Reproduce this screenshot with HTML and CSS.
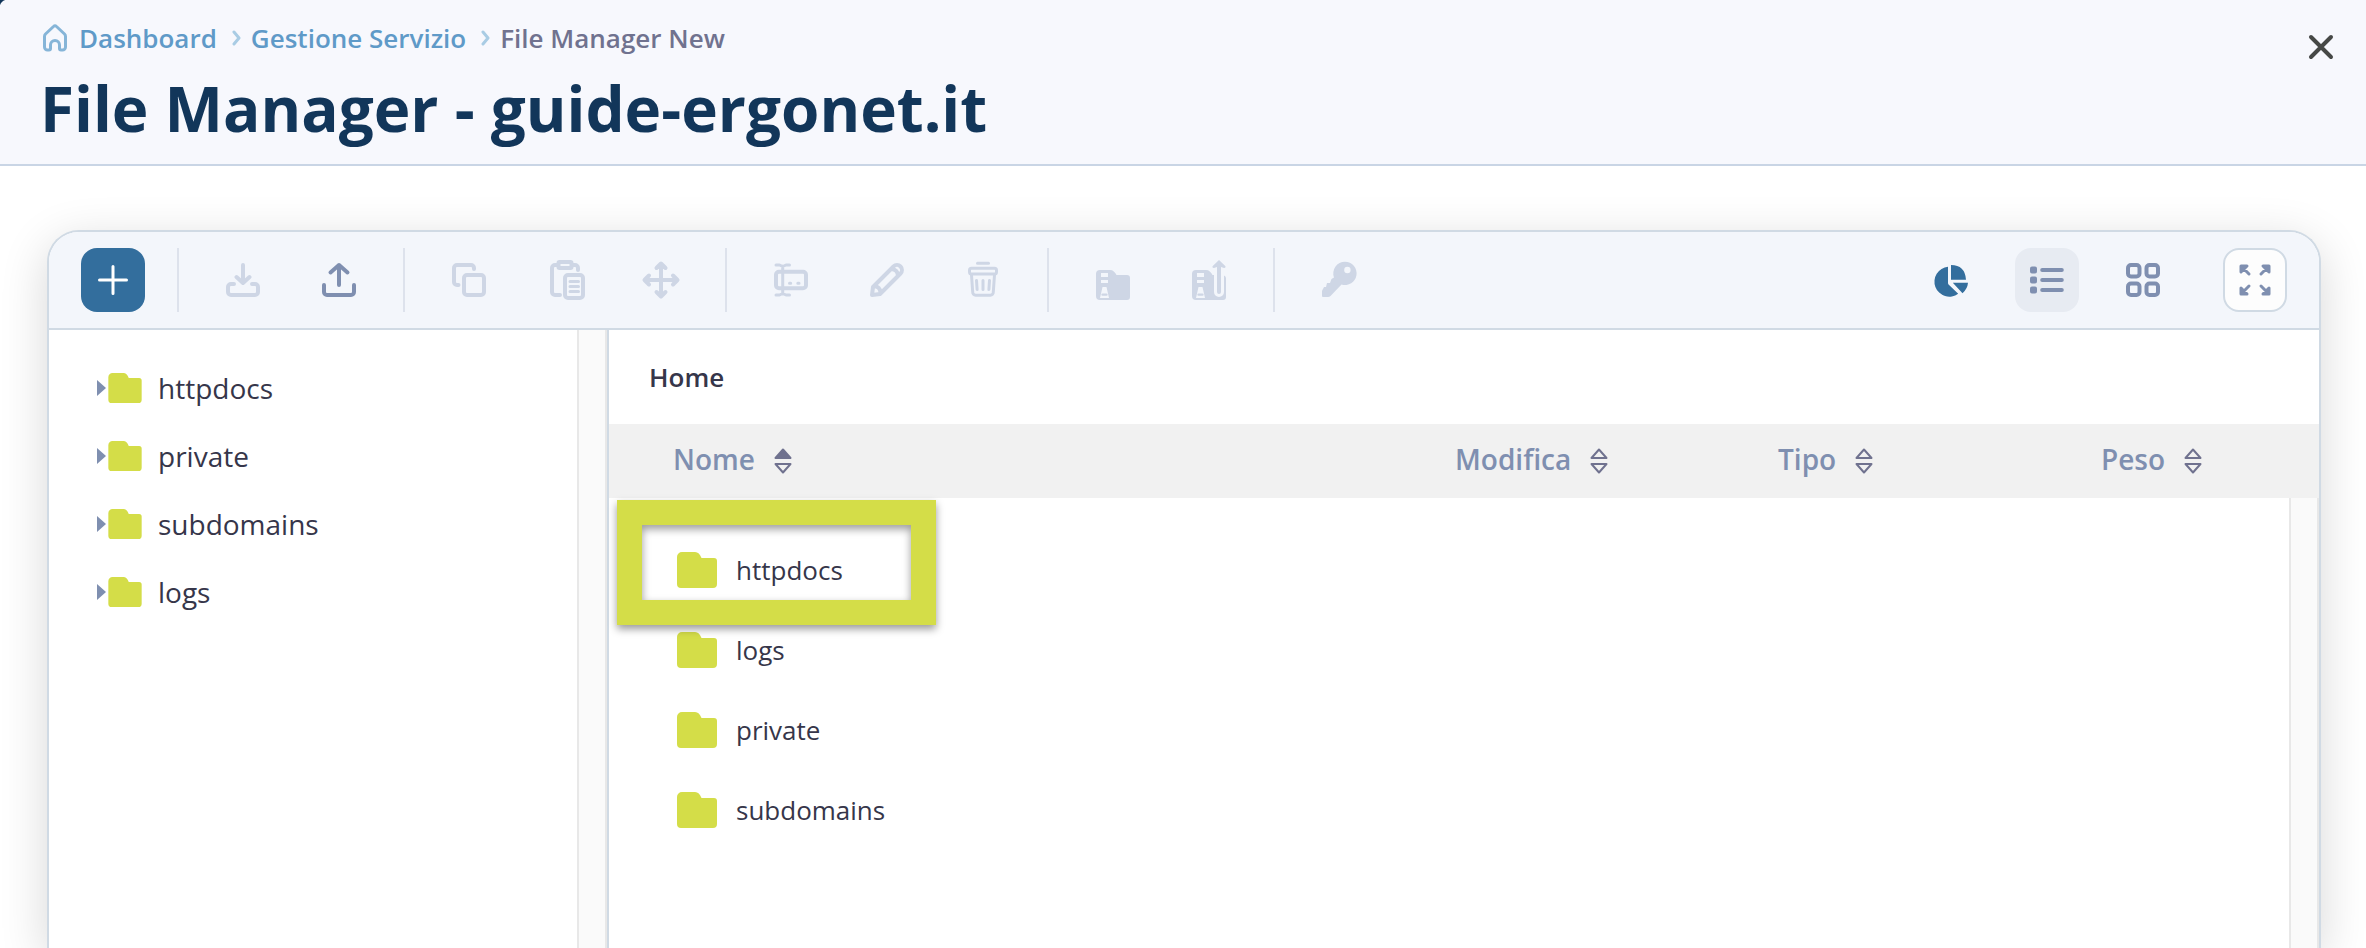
FILE: index.html
```html
<!DOCTYPE html>
<html lang="it">
<head>
  <meta charset="UTF-8">
  <meta name="viewport" content="width=device-width, initial-scale=1.0">
  <title>File Manager - guide-ergonet.it</title>
  <link rel="stylesheet" href="styles.css">
</head>
<body>
  <svg class="symbols" aria-hidden="true">
    <symbol id="folder" viewBox="0 0 40 36">
      <path d="M5 0h13c3 0 5 2 6.500 6H37a3 3 0 0 1 3 3v23a4 4 0 0 1-4 4H4a4 4 0 0 1-4-4V5a5 5 0 0 1 5-5z"/>
    </symbol>
    <symbol id="sort" viewBox="0 0 18 26">
      <path d="M9 1.500L16.500 10h-15zM9 24.500l7.500-8.500h-15z"/>
    </symbol>
    <symbol id="chevron" viewBox="0 0 16 16">
      <path d="M8 2l5 6-5 6"/>
    </symbol>
  </svg>

  <header class="page-header">
    <div class="header-text">
      <nav class="breadcrumb" aria-label="Breadcrumb">
        <svg class="home-icon" viewBox="0 0 26 28" aria-hidden="true"><path d="M2.500 12.500Q2.500 11 3.500 10L11.500 2.500Q13 1 14.500 2.500L22.500 10Q23.500 11 23.500 12.500V23a3 3 0 0 1-3 3H19a1.500 1.500 0 0 1-1.500-1.500V21a4.500 4.500 0 0 0-9 0v3.500A1.500 1.500 0 0 1 7 26H5.500a3 3 0 0 1-3-3z"/></svg>
        <a href="#">Dashboard</a>
        <svg class="chevron" aria-hidden="true"><use href="#chevron"/></svg>
        <a href="#">Gestione Servizio</a>
        <svg class="chevron" aria-hidden="true"><use href="#chevron"/></svg>
        <span>File Manager New</span>
      </nav>
      <h1>File Manager - guide-ergonet.it</h1>
    </div>
    <button class="close" aria-label="Chiudi">
      <svg viewBox="0 0 24 24"><path d="M2 2l20 20M22 2L2 22"/></svg>
    </button>
  </header>

  <main class="card">
    <div class="toolbar">
      <button class="tool add" aria-label="Nuovo">
        <svg viewBox="0 0 40 40"><path d="M20 6.500v27M6.500 20h27"/></svg>
      </button>
      <span class="separator"></span>
      <button class="tool" disabled aria-label="Scarica">
        <svg viewBox="0 0 40 40"><path d="M20 5v17M13.500 17l6.500 6 6.500-6M11 24H8a3 3 0 0 0-3 3v5a3 3 0 0 0 3 3h24a3 3 0 0 0 3-3v-5a3 3 0 0 0-3-3h-3"/></svg>
      </button>
      <button class="tool" aria-label="Carica">
        <svg viewBox="0 0 40 40"><path d="M20 25V5M11.500 12.500L20 5l8.500 7.500M5 25v7a3 3 0 0 0 3 3h24a3 3 0 0 0 3-3v-7"/></svg>
      </button>
      <span class="separator"></span>
      <button class="tool" disabled aria-label="Copia">
        <svg viewBox="0 0 40 40"><path d="M25 9V8a3 3 0 0 0-3-3H8a3 3 0 0 0-3 3v14a3 3 0 0 0 3 3h1.500"/><rect x="15" y="15" width="20" height="20" rx="3"/></svg>
      </button>
      <button class="tool" disabled aria-label="Incolla">
        <svg viewBox="0 0 40 40"><path d="M13 5h-3a3 3 0 0 0-3 3v24a3 3 0 0 0 3 3h5M27 5h3a3 3 0 0 1 3 3v2"/><rect x="13.500" y="2" width="13" height="6" rx="1"/><rect x="20" y="15" width="18" height="23" rx="3"/><path class="thin" d="M25 21.500h8.500M25 26.500h8.500M25 31.500h8.500"/></svg>
      </button>
      <button class="tool" disabled aria-label="Sposta">
        <svg viewBox="0 0 40 40"><path d="M20 4v32M4 20h32M15.500 8L20 3.500 24.500 8M15.500 32l4.500 4.500 4.500-4.500M8 15.500L3.500 20 8 24.500M32 15.500l4.500 4.500-4.500 4.500"/></svg>
      </button>
      <span class="separator"></span>
      <button class="tool" disabled aria-label="Rinomina">
        <svg viewBox="0 0 40 40"><path class="thin" d="M5 5h3.500l3.200 1.500L15 5h3.500M11.700 6v28M5 35h3.500l3.200-1.500L15 35h3.500"/><rect x="5" y="11.700" width="30" height="16.600" rx="3"/><path class="thin" d="M18.500 23.300h1.200M26.800 23.300H28"/></svg>
      </button>
      <button class="tool" disabled aria-label="Modifica">
        <svg viewBox="0 0 40 40"><path d="M5 35l1-8L26.500 6.500a4.900 4.900 0 0 1 7 7L13 34zM24.500 9q6 .5 6.500 6.500M7 26q6 .5 6.500 6.500"/></svg>
      </button>
      <button class="tool" disabled aria-label="Elimina">
        <svg viewBox="0 0 40 40"><path class="thin" d="M14.500 3.300h11"/><rect class="thin" x="6.500" y="8.300" width="27" height="5.800" rx="2"/><path class="thin" d="M8.500 15l1.200 17a3 3 0 0 0 3 3.300h14.600a3 3 0 0 0 3-3.300l1.200-17M13.500 20.500l.6 9M20 20.500v9M26.500 20.500l-.6 9"/></svg>
      </button>
      <span class="separator"></span>
      <button class="tool" disabled aria-label="Comprimi">
        <svg class="filled" viewBox="0 0 40 40"><path fill-rule="evenodd" d="M7 10h10c3 0 5 2 6.500 5H34a3 3 0 0 1 3 3v19a3 3 0 0 1-3 3H7a4 4 0 0 1-4-4V14a4 4 0 0 1 4-4zM8 13v4h7v-4zM8 20v3h7v-3zM9.500 27L7 38h9l-2.500-11zM9.500 33.500h4a1 1 0 0 1 0 2.300h-4a1 1 0 0 1 0-2.300z"/></svg>
      </button>
      <button class="tool" disabled aria-label="Estrai">
        <svg class="filled" viewBox="0 0 40 40"><path fill-rule="evenodd" d="M7 10h10c3 0 5 2 6.500 5H25v17a5 5 0 0 0 10 0V15.500a3 3 0 0 1 2 2.500v19a3 3 0 0 1-3 3H7a4 4 0 0 1-4-4V14a4 4 0 0 1 4-4zM8 13v4h7v-4zM8 20v3h7v-3zM9.500 27L7 38h9l-2.500-11zM9.500 33.500h4a1 1 0 0 1 0 2.300h-4a1 1 0 0 1 0-2.300z"/><path d="M30 0l6.500 6.200q.5 2-1.500 1.800L32 7v25a2 2 0 0 1-4 0V7l-3 1q-2 .2-1.500-1.800z"/></svg>
      </button>
      <span class="separator"></span>
      <button class="tool" disabled aria-label="Permessi">
        <svg class="filled" viewBox="0 0 40 40"><path fill-rule="evenodd" d="M26 1.700a11.700 11.700 0 1 1-3.500 22.900L11.500 36q-1 1-2.500 1H4a1 1 0 0 1-1-1v-4.500q0-1.500 1-2.500l1-2h2l1-4h3l1.500-4 2.500-1.500A11.700 11.700 0 0 1 26 1.700zM28.400 6.800a3.200 3.200 0 1 0 0 6.400 3.200 3.200 0 0 0 0-6.400z"/></svg>
      </button>

      <div class="view-tools">
        <button class="tool usage" aria-label="Spazio utilizzato">
          <svg class="filled" viewBox="0 0 40 40"><path d="M17 6.700A15 15 0 1 0 27.200 33.800L17.800 24.700Q17 24 17 23zM20 5q14 0 15 14.700H20zM21.800 22.700H37q-.5 6-5.500 10.500z"/></svg>
        </button>
        <button class="tool selected" aria-label="Vista elenco" aria-pressed="true">
          <svg viewBox="0 0 40 40"><path d="M15.200 10h19.600M15.200 20h19.600M15.200 30h19.600M5 8.500h3v3H5zM5 18.500h3v3H5zM5 28.500h3v3H5z"/></svg>
        </button>
        <button class="tool" aria-label="Vista griglia" aria-pressed="false">
          <svg viewBox="0 0 40 40"><rect x="5" y="5" width="11.500" height="11.500" rx="3"/><rect x="23.500" y="5" width="11.500" height="11.500" rx="3"/><rect x="5" y="23.500" width="11.500" height="11.500" rx="3"/><rect x="23.500" y="23.500" width="11.500" height="11.500" rx="3"/></svg>
        </button>
        <button class="tool fullscreen" aria-label="Schermo intero">
          <svg viewBox="0 0 40 40"><path d="M6 12V6h6zM7 7l7 7M28 6h6v6zM33 7l-7 7M6 28v6h6zM7 33l7-7M34 28v6h-6zM33 33l-7-7"/></svg>
        </button>
      </div>
    </div>

    <div class="panels">
      <aside class="sidebar">
        <ul class="tree">
          <li><a href="#"><span class="arrow"></span><svg class="folder" aria-hidden="true"><use href="#folder"/></svg>httpdocs</a></li>
          <li><a href="#"><span class="arrow"></span><svg class="folder" aria-hidden="true"><use href="#folder"/></svg>private</a></li>
          <li><a href="#"><span class="arrow"></span><svg class="folder" aria-hidden="true"><use href="#folder"/></svg>subdomains</a></li>
          <li><a href="#"><span class="arrow"></span><svg class="folder" aria-hidden="true"><use href="#folder"/></svg>logs</a></li>
        </ul>
        <div class="track"></div>
      </aside>

      <section class="files">
        <div class="location">Home</div>
        <div class="list">
          <table>
            <thead>
              <tr>
                <th class="col-name"><button>Nome <svg class="sort" viewBox="0 0 18 26"><path class="up" d="M9 1.500L16.500 10h-15z"/><path d="M9 24.500l7.500-8.500h-15z"/></svg></button></th>
                <th class="col-meta"><button>Modifica <svg class="sort"><use href="#sort"/></svg></button></th>
                <th class="col-meta"><button>Tipo <svg class="sort"><use href="#sort"/></svg></button></th>
                <th><button>Peso <svg class="sort"><use href="#sort"/></svg></button></th>
              </tr>
            </thead>
            <tbody>
              <tr><td colspan="4"><a href="#"><svg class="folder" aria-hidden="true"><use href="#folder"/></svg>httpdocs</a></td></tr>
              <tr><td colspan="4"><a href="#"><svg class="folder" aria-hidden="true"><use href="#folder"/></svg>logs</a></td></tr>
              <tr><td colspan="4"><a href="#"><svg class="folder" aria-hidden="true"><use href="#folder"/></svg>private</a></td></tr>
              <tr><td colspan="4"><a href="#"><svg class="folder" aria-hidden="true"><use href="#folder"/></svg>subdomains</a></td></tr>
            </tbody>
          </table>
          <div class="track"></div>
          <div class="highlight"></div>
        </div>
      </section>
    </div>
  </main>
</body>
</html>
```

FILE: styles.css
```css
* {
  box-sizing: border-box;
}
body {
  margin: 0;
  min-height: 100vh;
  display: flex;
  flex-direction: column;
  font-family: 'Open Sans', sans-serif;
  font-size: 26px;
  line-height: 36px;
  color: #36364a;
  background: #fff;
}
a {
  color: inherit;
  text-decoration: none;
}
button {
  font: inherit;
  color: inherit;
  border: none;
  padding: 0;
  background: none;
  cursor: pointer;
}
svg {
  display: block;
  flex: none;
  fill: none;
  stroke: currentColor;
  stroke-linecap: round;
  stroke-linejoin: round;
  overflow: visible;
}
.symbols {
  position: absolute;
  width: 0;
  height: 0;
}

/* header */
.page-header {
  display: flex;
  justify-content: space-between;
  align-items: flex-start;
  padding: 20px 33px 16px 40px;
  border-bottom: 2px solid #c9d5e5;
  background: radial-gradient(circle at 8px 8px, #f7f8fd 8px, #12365a 9px) 0 0 / 8px 8px no-repeat, #f7f8fd;
}
.breadcrumb {
  display: flex;
  align-items: center;
  gap: 9px;
  font-weight: 600;
  color: #70728f;
}
.breadcrumb a {
  color: #5f9ac8;
}
.home-icon {
  width: 30px;
  height: 28px;
  color: #86b5d8;
  stroke-width: 3;
}
.chevron {
  width: 16px;
  height: 16px;
  color: #a9cce4;
  stroke-width: 3;
}
h1 {
  margin: 12px 0 0;
  font-size: 62px;
  line-height: 80px;
  font-weight: 700;
  color: #12365a;
}
.close {
  margin-top: 15px;
  color: #464846;
}
.close svg {
  width: 24px;
  height: 24px;
  stroke-width: 4;
}

/* file manager */
.card {
  flex: 1;
  display: flex;
  flex-direction: column;
  margin: 64px 45px 0 47px;
  border: 2px solid #d0dae4;
  border-bottom: none;
  border-radius: 32px 32px 0 0;
  background: #fff;
  box-shadow: 0 12px 48px rgba(0, 0, 0, 0.16);
}
.toolbar {
  display: flex;
  align-items: center;
  gap: 32px;
  padding: 16px 32px;
  border-bottom: 2px solid #d0dae4;
  border-radius: 30px 30px 0 0;
  background: #f3f6fb;
}
.separator {
  width: 2px;
  height: 64px;
  background: #dde2ec;
}
.tool {
  display: flex;
  align-items: center;
  justify-content: center;
  flex: none;
  width: 64px;
  height: 64px;
  border-radius: 16px;
  color: #7f8fb0;
}
.tool svg {
  width: 40px;
  height: 40px;
  stroke-width: 4;
}
.tool .thin {
  stroke-width: 3;
}
.tool .filled {
  fill: currentColor;
  stroke: none;
}
.tool:disabled {
  color: #ced6e5;
  cursor: default;
}
.add {
  background: #336e9d;
  color: #fff;
}
.add svg {
  stroke-width: 3;
}
.view-tools {
  display: flex;
  gap: 32px;
  margin-left: auto;
}
.usage {
  color: #336e9d;
}
.selected {
  background: #e7ebf2;
}
.fullscreen {
  margin-left: 16px;
  border: 2px solid #d0dae4;
  background: #fdfdfd;
}
.fullscreen svg {
  fill: currentColor;
  stroke-width: 3;
}
.panels {
  flex: 1;
  display: flex;
}

/* tree */
.sidebar {
  display: flex;
  flex: none;
  width: 558px;
}
.tree {
  flex: 1;
  margin: 0;
  padding: 24px 48px;
  list-style: none;
  font-size: 28px;
}
.tree a {
  display: flex;
  align-items: center;
  height: 68px;
}
.arrow {
  border-style: solid;
  border-width: 8px 0 8px 9px;
  border-color: transparent transparent transparent #7f8fb0;
  margin-right: 2px;
}
.folder {
  width: 40px;
  height: 36px;
  margin-right: 19px;
  fill: #d4dd48;
  stroke: none;
}
.tree .folder {
  width: 34px;
  height: 30px;
  margin-right: 16px;
}
.track {
  width: 30px;
  border: solid #e8e8e8;
  border-width: 0 2px;
  background: #fafafa;
}

/* file list */
.files {
  flex: 1;
  display: flex;
  flex-direction: column;
  border-left: 2px solid #d0dae4;
}
.location {
  padding: 29px 40px;
  font-weight: 600;
}
.list {
  flex: 1;
  position: relative;
}
table {
  width: 100%;
  table-layout: fixed;
  border-collapse: collapse;
}
th {
  height: 74px;
  padding: 0 0 4px 64px;
  background: #f1f1f1;
  font-size: 28px;
  font-weight: 600;
  color: #7f8fb0;
}
th button {
  display: flex;
  align-items: center;
  gap: 19px;
}
.col-name {
  width: 782px;
}
.col-meta {
  width: 323px;
}
.sort {
  width: 18px;
  height: 26px;
  margin-top: 4px;
  color: #70728f;
  stroke-width: 2;
}
.sort .up {
  fill: currentColor;
}
td {
  height: 80px;
  padding: 0 0 0 68px;
}
tbody::before {
  content: "";
  display: block;
  height: 32px;
}
td a {
  display: flex;
  align-items: center;
}
.list .track {
  position: absolute;
  top: 74px;
  right: 0;
  bottom: 0;
}
.highlight {
  position: absolute;
  top: 76px;
  left: 8px;
  width: 319px;
  height: 125px;
  border: 25px solid #d4dd48;
  box-shadow: 0 4px 8px rgba(0, 0, 0, 0.4), inset 0 4px 8px rgba(0, 0, 0, 0.4);
  pointer-events: none;
}
```
